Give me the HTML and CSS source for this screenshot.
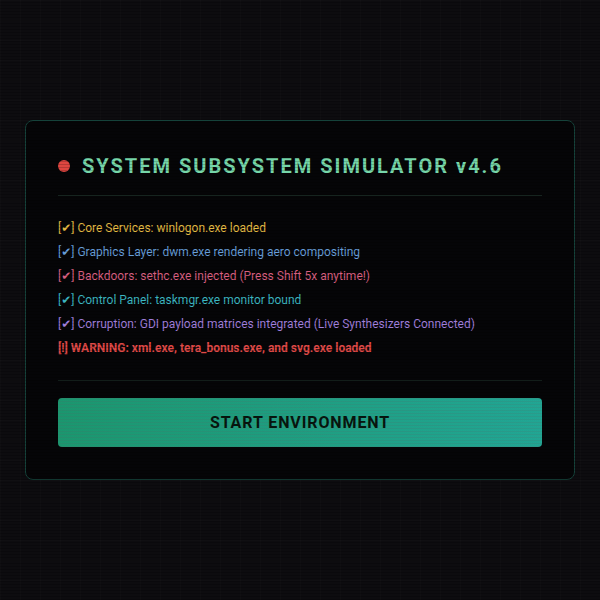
FILE: index.html
```html
<!DOCTYPE html>
<html lang="en">
<head>
<meta charset="utf-8">
<title>System Subsystem Simulator</title>
<link rel="stylesheet" href="styles.css">
</head>
<body>
  <main class="boot-card">
    <header class="boot-header">
      <span class="status-dot"></span>
      <h1 class="boot-title">SYSTEM SUBSYSTEM SIMULATOR v4.6</h1>
    </header>
    <ul class="boot-log">
      <li class="log-line log-core"><span class="mark">[<span class="tick">✔</span>]</span> Core Services: winlogon.exe loaded</li>
      <li class="log-line log-gfx"><span class="mark">[<span class="tick">✔</span>]</span> Graphics Layer: dwm.exe rendering aero compositing</li>
      <li class="log-line log-back"><span class="mark">[<span class="tick">✔</span>]</span> Backdoors: sethc.exe injected (Press Shift 5x anytime!)</li>
      <li class="log-line log-panel"><span class="mark">[<span class="tick">✔</span>]</span> Control Panel: taskmgr.exe monitor bound</li>
      <li class="log-line log-gdi"><span class="mark">[<span class="tick">✔</span>]</span> Corruption: GDI payload matrices integrated (Live Synthesizers Connected)</li>
      <li class="log-line log-warn">[!] WARNING: xml.exe, tera_bonus.exe, and svg.exe loaded</li>
    </ul>
    <button class="start-btn" type="button">START ENVIRONMENT</button>
  </main>
</body>
</html>
```
FILE: styles.css
```css
html, body {
  margin: 0;
  padding: 0;
}

body {
  min-height: 100vh;
  display: flex;
  align-items: center;
  justify-content: center;
  background-color: #0d0c0f;
  background-image:
    linear-gradient(rgba(255, 255, 255, 0.012) 1px, transparent 1px),
    linear-gradient(90deg, rgba(255, 255, 255, 0.012) 1px, transparent 1px);
  background-size: 20px 20px;
  font-family: Roboto, "Liberation Sans", sans-serif;
}

/* CRT scanlines across the whole screen */
body::after {
  content: "";
  position: fixed;
  inset: 0;
  pointer-events: none;
  background: repeating-linear-gradient(
    to bottom,
    rgba(0, 0, 0, 0) 0,
    rgba(0, 0, 0, 0) 2px,
    rgba(0, 0, 0, 0.18) 2px,
    rgba(0, 0, 0, 0.18) 3px
  );
}

.boot-card {
  box-sizing: border-box;
  width: 550px;
  padding: 31px 32px 32px;
  background: #050507;
  border: 1px solid #15423a;
  border-radius: 8px;
  display: flex;
  flex-direction: column;
}

.boot-header {
  display: flex;
  align-items: center;
  gap: 12px;
  padding: 0 0 15px 0;
  border-bottom: 1px solid #16241f;
}

.status-dot {
  width: 12px;
  height: 12px;
  border-radius: 50%;
  background: #de4640;
  flex: none;
}

.boot-title {
  margin: 0;
  font-size: 20px;
  line-height: 28px;
  font-weight: 700;
  letter-spacing: 2px;
  color: #76d6a9;
}

.boot-log {
  list-style: none;
  margin: 20px 0 0;
  padding: 0 0 20px;
  border-bottom: 1px solid #16241f;
}

.log-line {
  font-size: 12px;
  line-height: 24px;
  white-space: nowrap;
}

.tick {
  font-family: "DejaVu Sans", sans-serif;
  font-size: 12px;
}

.log-core  { color: #e2ba43; }
.log-gfx   { color: #679ed9; }
.log-back  { color: #d85f80; }
.log-panel { color: #3cb7c1; }
.log-gdi   { color: #a07fdc; }
.log-warn  { color: #e04a47; font-weight: 700; }

.start-btn {
  margin-top: 17px;
  height: 49px;
  width: 100%;
  border: none;
  border-radius: 4px;
  cursor: pointer;
  background:
    repeating-linear-gradient(
      to bottom,
      rgba(255, 255, 255, 0.07) 0,
      rgba(255, 255, 255, 0.07) 1px,
      rgba(0, 0, 0, 0.1) 1px,
      rgba(0, 0, 0, 0.1) 3px
    ),
    linear-gradient(90deg, #1ea77b, #25b8a4);
  font-family: Roboto, "Liberation Sans", sans-serif;
  font-size: 16px;
  font-weight: 700;
  letter-spacing: 0.9px;
  color: #08160f;
}
```
